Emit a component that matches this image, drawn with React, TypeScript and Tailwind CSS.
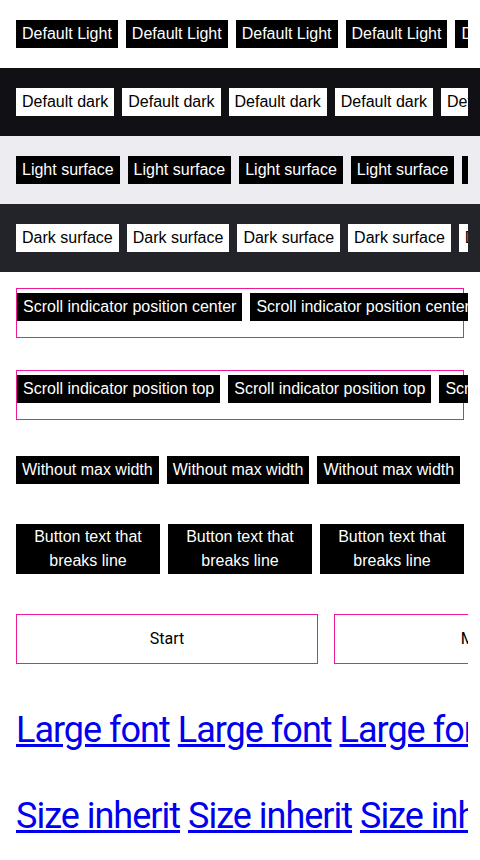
const arial = "font-['Liberation_Sans',Arial,sans-serif]";
const din = "font-['Roboto','Liberation_Sans',sans-serif]";

function Row({ children }: { children: React.ReactNode }) {
  return (
    <div className="pl-4 pr-3">
      <div className="overflow-hidden">
        <div className="flex w-max gap-2">{children}</div>
      </div>
    </div>
  );
}

function Chip({ label, dark }: { label: string; dark?: boolean }) {
  return (
    <button
      className={`${arial} h-7 shrink-0 whitespace-nowrap px-1.5 text-base leading-6 ${
        dark ? 'bg-white text-black' : 'bg-black text-white'
      }`}
    >
      {label}
    </button>
  );
}

const six = [0, 1, 2, 3, 4, 5];

function Surface({ label, bg, dark }: { label: string; bg: string; dark?: boolean }) {
  return (
    <section className={`${bg} py-5`}>
      <Row>
        {six.map((i) => (
          <Chip key={i} label={label} dark={dark} />
        ))}
      </Row>
    </section>
  );
}

function ScrollBox({ label, className }: { label: string; className: string }) {
  return (
    <div className={`pl-4 pr-3 ${className}`}>
      <div className="overflow-hidden">
        <div className="w-[448px] border border-[#ee1a9a] pt-1 pb-4">
          <div className="flex w-max gap-2">
            {six.map((i) => (
              <Chip key={i} label={label} />
            ))}
          </div>
        </div>
      </div>
    </div>
  );
}

export default function App() {
  return (
    <div className="min-h-[860px] bg-white pb-10">
      <Surface label="Default Light" bg="bg-white" />
      <Surface label="Default dark" bg="bg-[#101015]" dark />
      <Surface label="Light surface" bg="bg-[#ededf1]" />
      <Surface label="Dark surface" bg="bg-[#232429]" dark />

      <ScrollBox label="Scroll indicator position center" className="mt-4" />
      <ScrollBox label="Scroll indicator position top" className="mt-8" />

      <div className="mt-9">
        <Row>
          {six.map((i) => (
            <Chip key={i} label="Without max width" />
          ))}
        </Row>
      </div>

      <div className="mt-10">
        <Row>
          {six.map((i) => (
            <button
              key={i}
              className={`${arial} flex min-h-7 w-36 shrink-0 items-center justify-center bg-black px-1.5 py-px text-center text-base leading-6 text-white`}
            >
              Button text that breaks line
            </button>
          ))}
        </Row>
      </div>

      <div className="mt-10">
        <div className="pl-4 pr-3">
          <div className="overflow-hidden">
            <div className="flex w-max gap-4">
              {['Start', 'Middle', 'End'].map((t) => (
                <div
                  key={t}
                  className={`${din} flex h-[50px] w-[302px] shrink-0 items-center justify-center border border-[#ee1a9a] text-base text-black`}
                >
                  {t}
                </div>
              ))}
            </div>
          </div>
        </div>
      </div>

      <div className="mt-[42px]">
        <Row>
          {six.map((i) => (
            <a
              key={i}
              href="#"
              className={`${din} shrink-0 whitespace-nowrap text-[36px] leading-12 tracking-[-1px] text-[#0000ee] underline`}
            >
              Large font
            </a>
          ))}
        </Row>
      </div>

      <div className="mt-[38px]">
        <Row>
          {six.map((i) => (
            <a
              key={i}
              href="#"
              className={`${din} shrink-0 whitespace-nowrap text-[36px] leading-12 tracking-[-1px] text-[#0000ee] underline`}
            >
              Size inherit
            </a>
          ))}
        </Row>
      </div>
    </div>
  );
}
